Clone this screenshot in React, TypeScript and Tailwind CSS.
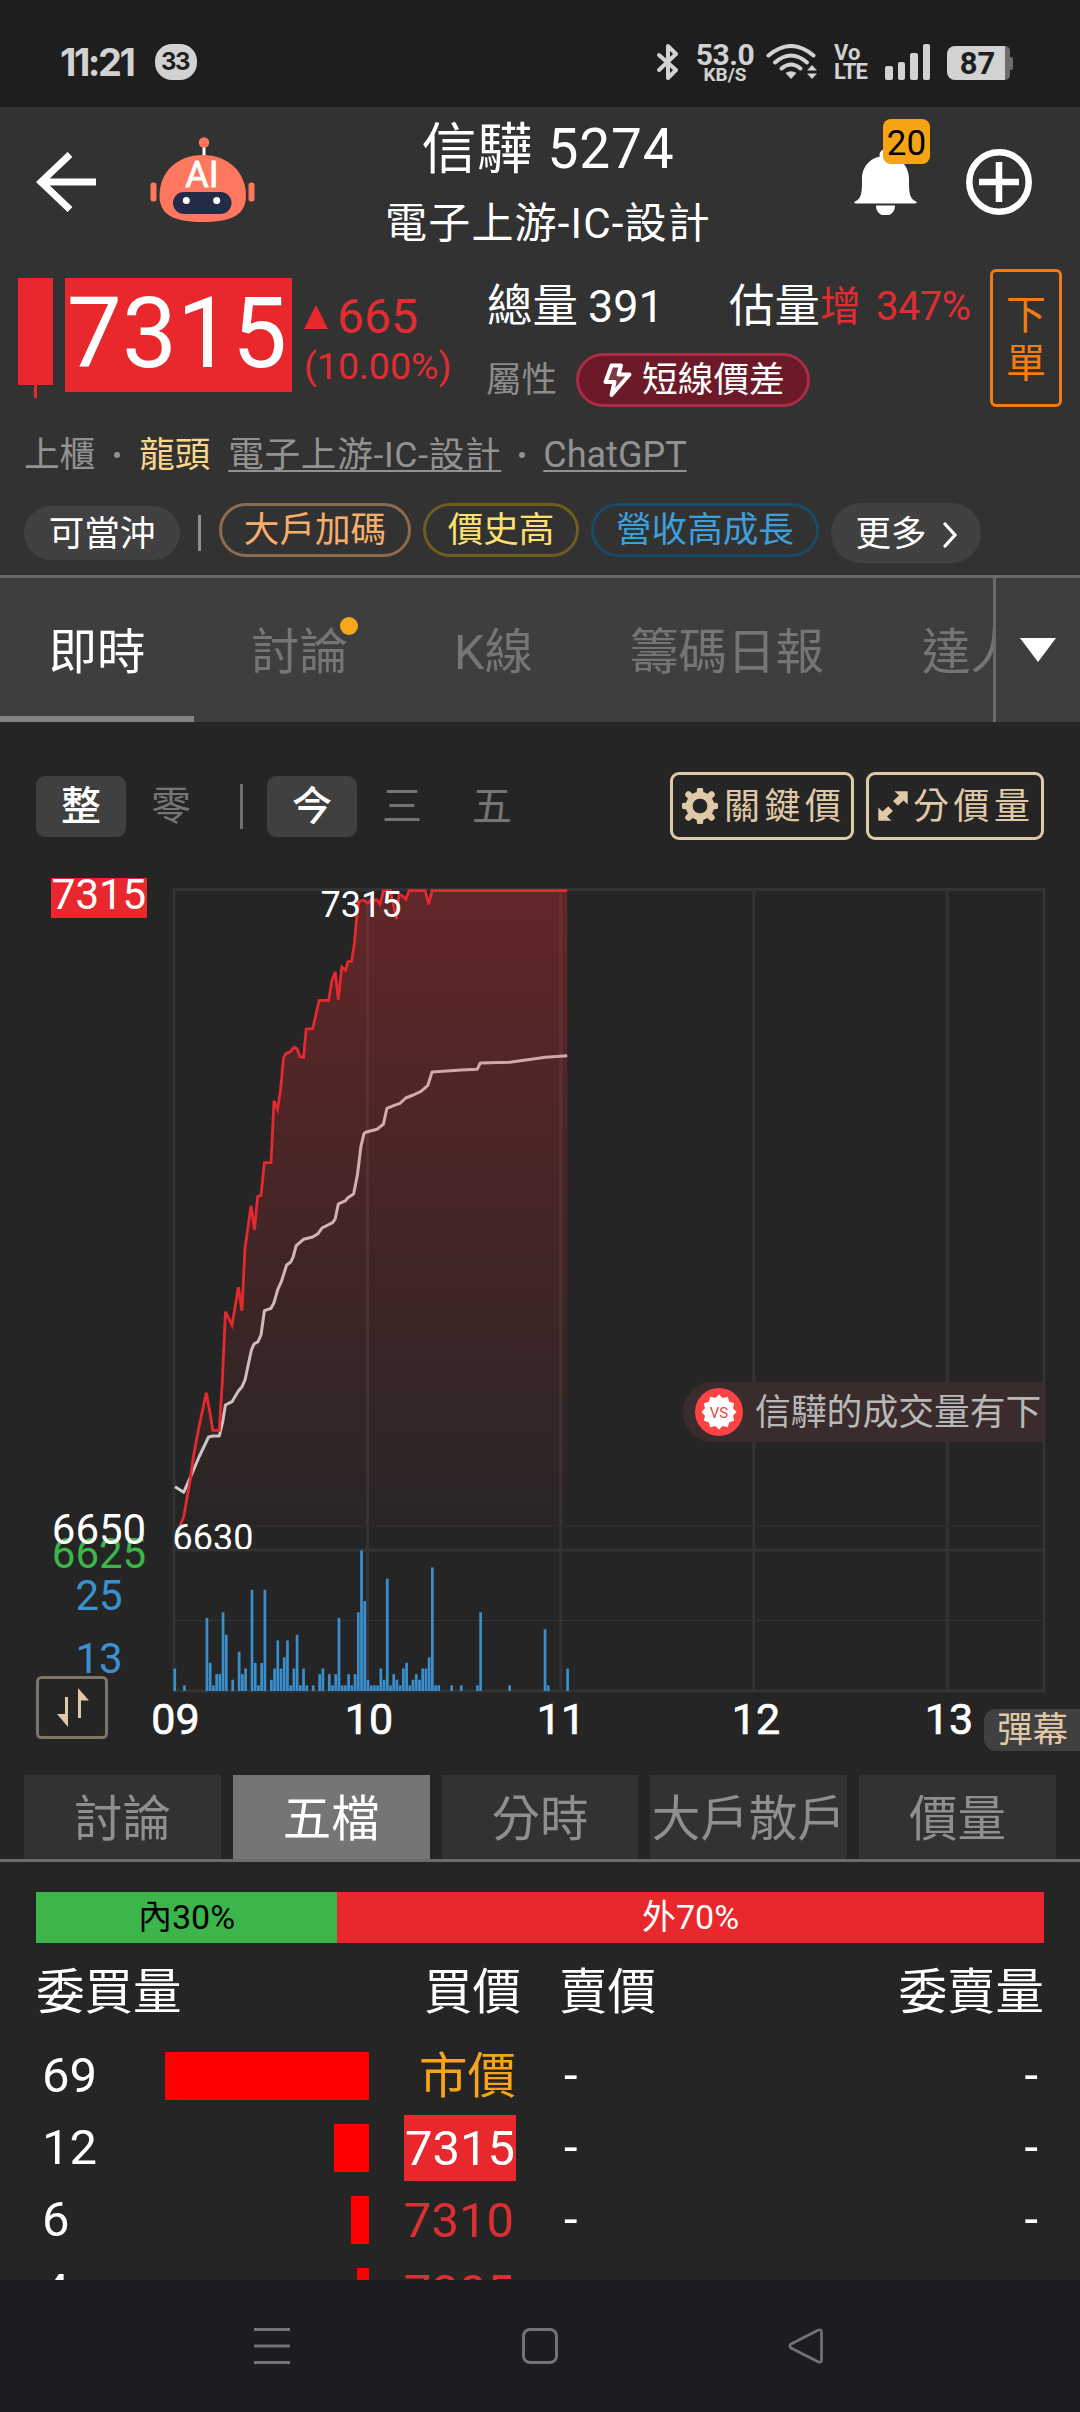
import clsx from "clsx";
import type { ReactNode } from "react";

// Precio por tick: x = minuto, y = precio, ya en coordenadas del gráfico.
const PRICE_LINE =
  "180,1526 183.7,1516.7 190.2,1480 193,1459 199,1426.7 206.3,1392.7 210,1413 212.8,1430.3 219.3,1430.3 222.3,1381.7 225.4,1311.7 232,1325 238.4,1287.3 241.9,1310.7 245,1248.3 251,1205.7 254.5,1229.7 257.6,1196.7 261,1195.3 264.4,1162.7 271,1162.7 274,1100.7 277.5,1109.3 280.5,1090 283.6,1057.3 286.3,1053.3 289.7,1052.3 292,1049.3 294.7,1047.3 297,1049 300,1056.7 303.5,1057.3 306.2,1029 312.7,1028.7 319.2,1000.3 328.7,1000.3 331.8,981 335.2,972 338.3,999.7 341.8,967 345.6,970.3 347.9,962 351.7,961 354.4,943.3 357,915 358.6,901.7 363.6,900 367.8,903.3 371,900 377,900 380,904 383.5,890.7 390.4,890.7 396.5,919 399,894.3 402.2,895.7 406,899.3 409,890.7 425.2,890.7 428.6,904.3 432,890.7 567.2,890.7";

const AVERAGE_LINE =
  "175,1486.7 183.7,1492.3 191.4,1475 199,1457 208.6,1437 212.8,1436 219.3,1436 222.7,1421.7 225.4,1405 232,1401.7 238.4,1391 242,1386.7 245,1380 251.4,1350 254,1344 258,1341.7 261,1335 264.4,1310.7 271,1308.3 274,1302.7 277.8,1289.3 281.3,1281.7 286.6,1265 290.5,1262.3 293,1257.3 296.2,1245.7 303.5,1239.3 312.7,1237 318,1233.7 322,1228 332.6,1222.7 335.2,1219 338.3,1204 345.6,1200.7 347.9,1197.7 353.6,1194 357.4,1175 360.9,1146.7 364,1133.3 367.4,1131.7 377,1129.3 383.5,1124 386.9,1108.3 394.2,1105.3 400,1103.3 405.7,1098 413.3,1095 421,1091.3 427.9,1085.3 432,1072 461.2,1070 477.2,1069.3 480.3,1063 509.8,1062.3 545.4,1057.3 567.2,1055.7";

// [minuto desde las 09:00, volumen]
const VOLUME: [number, number][] = [
  [0, 4], [3, 1], [10, 13], [11, 5], [12, 1], [13, 3], [14, 3], [15, 14], [16, 10], [18, 2],
  [20, 7], [21, 3], [22, 4], [24, 18], [25, 5], [26, 1], [27, 5], [28, 18], [30, 2], [31, 4],
  [32, 9], [33, 4], [34, 6], [35, 9], [36, 1], [37, 4], [38, 10], [39, 1], [40, 4], [41, 1],
  [43, 1], [45, 3], [46, 4], [48, 3], [49, 1], [50, 3], [51, 13], [52, 1], [53, 1], [54, 3],
  [55, 1], [56, 3], [57, 14], [58, 25], [59, 16], [60, 2], [61, 1], [62, 1], [63, 1], [64, 4],
  [65, 2], [66, 20], [67, 1], [68, 3], [69, 2], [70, 1], [71, 4], [72, 5], [73, 1], [74, 2],
  [75, 3], [76, 2], [77, 4], [78, 4], [79, 6], [80, 22], [81, 1], [82, 1], [86, 1], [89, 1],
  [94, 1], [95, 14], [104, 1], [115, 11], [116, 1], [122, 4],
];

const HOURS = [
  { label: "09", x: 175.5 },
  { label: "10", x: 369 },
  { label: "11", x: 561 },
  { label: "12", x: 756 },
  { label: "13", x: 949 },
];

const ORDERS = [
  { qty: "69", price: "市價", bar: 204, tone: "market" },
  { qty: "12", price: "7315", bar: 35, tone: "limit" },
  { qty: "6", price: "7310", bar: 18, tone: "up" },
  { qty: "4", price: "7305", bar: 12, tone: "up" },
];

function StatusBar() {
  return (
    <div className="flex h-[107px] items-start bg-[#1e1e1e] pt-11 text-[#d2d2d2]">
      <span className="ml-[60px] h-9 w-[80px] text-[38px] leading-[36px] font-bold tracking-[-2.500px] font-['Inter',sans-serif]">
        11:21
      </span>
      <span className="ml-[15px] flex h-9 w-[42px] items-center justify-center rounded-[17px] bg-[#d2d2d2] pr-[2px] text-[24px] leading-none font-bold tracking-[-1.500px] text-[#1e1e1e] font-['Inter',sans-serif]">
        33
      </span>
      <svg className="ml-[460px] h-9 w-[21px]" viewBox="0 0 21 36" fill="none" stroke="currentColor" strokeWidth="4" strokeLinecap="round" strokeLinejoin="round">
        <path d="M2 11 L19 26 L11 34 V2 L19 10 L2 26" />
      </svg>
      <div className="ml-[17px] w-[60px] text-center font-bold">
        <div className="h-[21px] text-[30px] leading-[21px] tracking-[-0.500px]">53.0</div>
        <div className="text-[19px] leading-[20px]">KB/S</div>
      </div>
      <svg className="ml-[11px] h-9 w-[52px]" viewBox="0 0 52 36" fill="none" stroke="currentColor" strokeWidth="4" strokeLinecap="round">
        <path d="M2.500 11.500 Q25 -7.500 47.500 11.500" />
        <path d="M9 18.500 Q25 4.500 41 18.500" />
        <path d="M15.500 24.500 Q25 16.500 34.500 24.500" />
        <path d="M19.500 29 Q25 25.500 30.500 29 L25 35 Z" fill="currentColor" stroke="none" />
        <path d="M41 26.500 L46 21 L51 26.500 Z M41 29.500 L46 35 L51 29.500 Z" fill="currentColor" stroke="none" />
      </svg>
      <div className="ml-[16px] w-[40px] font-bold">
        <div className="text-[22px] leading-[17px]">Vo</div>
        <div className="mt-[2px] text-[22px] leading-[18px] tracking-[-0.800px]">LTE</div>
      </div>
      <div className="ml-[11px] flex h-9 items-end gap-[5px]">
        <i className="h-[14px] w-[7.500px] rounded-[2px] bg-current" />
        <i className="h-[18px] w-[7.500px] rounded-[2px] bg-current" />
        <i className="h-[27px] w-[7.500px] rounded-[2px] bg-current" />
        <i className="h-[36px] w-[7.500px] rounded-[2px] bg-current" />
      </div>
      <div className="mt-[2px] ml-[17px] flex h-[34px] items-center">
        <div className="flex h-full w-[58px] items-center justify-center rounded-l-[8px] bg-current">
          <span className="ml-[3px] text-[31px] leading-none font-bold text-[#1e1e1e]">87</span>
        </div>
        <div className="h-full w-[5px] rounded-r-[5px] bg-[#6b6b6b]" />
        <div className="h-[13px] w-[2.500px] rounded-r-[2px] bg-[#6b6b6b]" />
      </div>
    </div>
  );
}

function Robot() {
  return (
    <svg className="h-[86px] w-[105px]" viewBox="150 138 105 86">
      <path d="M204 145 V158" stroke="#fff" strokeWidth="3" />
      <circle cx="204" cy="143.500" r="5.200" fill="#ff775e" />
      <rect x="150.500" y="183.500" width="6" height="19" rx="2.500" fill="#ff775e" />
      <rect x="248.500" y="183.500" width="6" height="19" rx="2.500" fill="#ff775e" />
      <path d="M202.800 156 C228 156 246 173 246 197 C246 217 229 223 202.800 223 C176 223 159.500 217 159.500 197 C159.500 173 177 156 202.800 156 Z" fill="#ff775e" />
      <rect x="173" y="193" width="58.500" height="22" rx="11" fill="#232b46" />
      <circle cx="186.300" cy="201.500" r="3.500" fill="#fff" />
      <circle cx="216.700" cy="201.500" r="3.500" fill="#fff" />
      <text x="202" y="188" textAnchor="middle" fontSize="36" fill="#fff" stroke="#fff" strokeWidth="0.800">AI</text>
    </svg>
  );
}

function TitleBar() {
  return (
    <div className="flex h-[150px] items-center">
      <div className="flex w-[260px] items-center">
        <svg className="ml-9 h-[60px] w-[60px]" viewBox="0 0 60 60" fill="none" stroke="#fff" strokeWidth="7">
          <path d="M34 2.500 L5 30 L34 57.500 M5 30 H60" />
        </svg>
        <div className="-mt-1 ml-[54px]">
          <Robot />
        </div>
      </div>
      <div className="flex h-full w-[576px] flex-col items-center pt-[10px] text-white">
        <div className="h-[64px] text-[55px] leading-[64px] tracking-[0.800px]">信驊 5274</div>
        <div className="mt-[15px] h-[56px] text-[42px] leading-[56px] tracking-[1.200px]">電子上游-IC-設計</div>
      </div>
      <div className="flex items-center">
        <div className="relative ml-[18px]">
          <svg className="h-[66px] w-[63px]" viewBox="0 0 63 66" fill="#fff">
            <circle cx="31.500" cy="6" r="6" />
            <path d="M31.500 7 C17 7 8 17 8 30 C8 42 8 50 1 52.500 Q-1 54 2 54.500 H61 Q64 54 62 52.500 C55 50 55 42 55 30 C55 17 46 7 31.500 7 Z" />
            <path d="M22 56.500 H41 C41 70 22 70 22 56.500 Z" />
          </svg>
          <span className="absolute -top-[30px] left-[29px] flex h-[45px] w-[47px] items-center justify-center rounded-[8px] bg-[#f7a414] pt-[3px] text-[35px] leading-none text-black">
            20
          </span>
        </div>
        <svg className="ml-[49px] h-[66px] w-[66px]" viewBox="0 0 66 66" fill="none" stroke="#fff" strokeWidth="6.500">
          <circle cx="33" cy="33" r="29.700" />
          <path d="M33 13 V53 M13 33 H53" />
        </svg>
      </div>
    </div>
  );
}

function Quote() {
  return (
    <div className="flex h-[163px] items-start pt-3">
      <div className="mt-[9px] ml-[18px] flex flex-col items-center">
        <div className="h-[107px] w-[35px] bg-[#e9282e]" />
        <div className="h-[13px] w-[3px] bg-[#e9282e]" />
      </div>
      <div className="mt-[9px] ml-3 flex h-[114px] w-[227px] justify-center bg-[#e9282e] pr-[3px] text-[98px] leading-[111px] text-white">
        7315
      </div>
      <div className="mt-[22px] ml-3 w-[180px] text-[#e02d32]">
        <div className="flex h-[52px] items-center">
          <svg className="h-6 w-6" viewBox="0 0 24 24">
            <path d="M12 0 L24 24 H0 Z" fill="#e9282e" />
          </svg>
          <span className="ml-[9px] text-[48px] leading-[52px]">665</span>
        </div>
        <div className="h-[46px] text-[37.500px] leading-[46px]">(10.00%)</div>
      </div>
      <div className="ml-[1px] w-[502px] shrink-0">
        <div className="mt-[15px] flex h-[46px] items-center text-[45.500px] leading-[46px] whitespace-nowrap text-white">
          <span className="ml-[2px]">總量</span>
          <span className="ml-[10px] text-[45px]">391</span>
          <span className="ml-[65px]">估量</span>
          <span className="text-[41px] text-[#e02d32]">增</span>
          <span className="ml-[15px] text-[40px] tracking-[-0.500px] text-[#e02d32]">347%</span>
        </div>
        <div className="mt-[23px] flex h-[54px] items-center">
          <span className="ml-[1px] text-[35.500px] leading-[54px] text-[#8c8c8c]">屬性</span>
          <div className="ml-[19px] flex h-[54px] w-[234px] items-center rounded-full border-[3px] border-[#ac2c47] bg-[#6c1a28] text-white">
            <svg className="ml-[24px] h-[35px] w-[29px]" viewBox="0 0 29 35" fill="#ffffff22" stroke="#fff" strokeWidth="4" strokeLinejoin="round">
              <path d="M8.500 2.500 H18 L15.500 11.500 H26.500 L8.500 32 L11.500 19 H2.500 Z" />
            </svg>
            <span className="ml-[10px] text-[35.700px] leading-[48px]">短線價差</span>
          </div>
        </div>
      </div>
      <button className="ml-[3px] flex h-[138px] w-[72px] shrink-0 flex-col items-center rounded-[6px] border-[3px] border-[#ee7d18] pt-[20px] text-[40px] leading-[48px] text-[#f57c10]">
        <span>下</span>
        <span>單</span>
      </button>
    </div>
  );
}

function MetaRow() {
  return (
    <div className="mt-[15px] flex h-10 items-center text-[35.600px] leading-10 whitespace-nowrap text-[#929292]">
      <span className="ml-[24px]">上櫃</span>
      <i className="ml-[19px] size-[6px] rounded-full bg-[#929292]" />
      <span className="ml-[19px] text-[#f9d88d]">龍頭</span>
      <a className="ml-[18px] tracking-[0.700px] underline decoration-2 underline-offset-[3px] [text-decoration-skip-ink:none]">電子上游-IC-設計</a>
      <i className="ml-[18px] size-[6px] rounded-full bg-[#929292]" />
      <a className="ml-[18px] text-[36px] underline decoration-2 underline-offset-[3px] [text-decoration-skip-ink:none]">ChatGPT</a>
    </div>
  );
}

function Chip({ className, children }: { className: string; children: ReactNode }) {
  return (
    <span
      className={clsx(
        "flex items-center justify-center rounded-full text-[35.600px] leading-[48px] whitespace-nowrap",
        className,
      )}
    >
      {children}
    </span>
  );
}

function ChipRow() {
  return (
    <div className="mt-[28px] flex h-[72px] items-start">
      <Chip className="mt-[3px] ml-6 h-[54px] w-[156px] bg-[#414141] pt-px text-white">可當沖</Chip>
      <i className="mt-3 ml-[18px] h-9 w-[3px] bg-[#8f8f8f]" />
      <Chip className="ml-[18px] h-[54px] w-[192px] border-[3px] border-[#8d6b4f] text-[#f9ae6b]">大戶加碼</Chip>
      <Chip className="ml-3 h-[54px] w-[156px] border-[3px] border-[#6f5d1d] text-[#fde06e]">價史高</Chip>
      <Chip className="ml-3 h-[54px] w-[228px] border-[3px] border-[#194a68] text-[#3d9fdc]">營收高成長</Chip>
      <Chip className="ml-3 h-[60px] w-[150px] bg-[#414141] pt-px text-white">
        更多
        <svg className="mt-[2px] ml-[16px] h-[26px] w-[14px]" viewBox="0 0 14 26" fill="none" stroke="#fff" strokeWidth="3.200" strokeLinecap="round">
          <path d="M2 2 L12 13 L2 24" />
        </svg>
      </Chip>
    </div>
  );
}

function TabBar() {
  return (
    <div className="flex h-[147px] border-t-[3px] border-[#6a6a6a] bg-[#3e3e3e]">
      <div className="flex w-[993px] overflow-hidden text-[48.500px] leading-[138px] whitespace-nowrap text-[#757575]">
        <div className="h-full w-[194px] shrink-0 border-b-[6px] border-[#828282] pt-[6px] text-center leading-[138px] text-white">即時</div>
        <div className="relative ml-[57px] pt-[6px]">
          討論
          <i className="absolute top-[39px] left-[89px] size-[18px] rounded-full bg-[#f5a81c]" />
        </div>
        <div className="ml-[106px] pt-[6px]">K線</div>
        <div className="ml-[97px] pt-[6px]">籌碼日報</div>
        <div className="ml-[98px] pt-[6px]">達人</div>
      </div>
      <div className="flex flex-1 items-center justify-center border-l-[3px] border-[#6a6a6a]">
        <svg className="h-6 w-9" viewBox="0 0 36 24">
          <path d="M0 0 H36 L18 24 Z" fill="#fff" />
        </svg>
      </div>
    </div>
  );
}

function Toggle({ active, children }: { active?: boolean; children: ReactNode }) {
  return (
    <span
      className={clsx(
        "flex h-[61px] w-[90px] items-center justify-center rounded-[9px] pt-[2px] text-[40px] leading-none",
        active ? "bg-[#404040] font-medium text-white" : "text-[#757575]",
      )}
    >
      {children}
    </span>
  );
}

function Toolbar() {
  return (
    <div className="flex h-[168px] items-center pl-9">
      <Toggle active>整</Toggle>
      <Toggle>零</Toggle>
      <i className="ml-[24px] h-[45px] w-[3px] bg-[#6f6f6f]" />
      <span className="w-[24px]" />
      <Toggle active>今</Toggle>
      <Toggle>三</Toggle>
      <Toggle>五</Toggle>
      <button className="ml-[133px] flex h-[68px] w-[184px] items-center rounded-[9px] border-[3px] border-[#e0c9a6] text-[36px] leading-none tracking-[4.500px] whitespace-nowrap text-[#e0c9a6]">
        <svg className="ml-[9px] h-9 w-9 shrink-0" viewBox="-18 -18 36 36" fill="none" stroke="#e0c9a6">
          <circle r="10.700" strokeWidth="7" />
          <path
            d="M0 -13 V-15.500 M0 13 V15.500 M-13 0 H-15.500 M13 0 H15.500 M9.500 9.500 L11.500 11.500 M-9.500 -9.500 L-11.500 -11.500 M9.500 -9.500 L11.500 -11.500 M-9.500 9.500 L-11.500 11.500"
            strokeWidth="6.500"
            strokeLinecap="round"
          />
          <circle r="7.300" fill="#252525" stroke="none" />
        </svg>
        <span className="ml-[6px] pt-px">關鍵價</span>
      </button>
      <button className="ml-3 flex h-[68px] w-[178px] items-center rounded-[9px] border-[3px] border-[#e0c9a6] text-[36px] leading-none tracking-[4.500px] whitespace-nowrap text-[#e0c9a6]">
        <svg className="ml-[9px] h-[30px] w-[30px] shrink-0" viewBox="0 0 30 30" fill="#e0c9a6">
          <path d="M16.500 0.300 H29.700 V13.500 L25.500 9.500 L19.800 14.800 L15 10 L21 4.500 Z" />
          <path d="M13.500 29.700 H0.300 V16.500 L4.500 20.500 L10.200 15.200 L15 20 L9 25.500 Z" />
        </svg>
        <span className="ml-[5px] pt-px">分價量</span>
      </button>
    </div>
  );
}

function VsBadge() {
  const points = Array.from({ length: 24 }, (_, i) => {
    const r = i % 2 ? 14.5 : 17.5;
    const a = (i * Math.PI) / 12;
    return `${r * Math.sin(a)},${-r * Math.cos(a)}`;
  }).join(" ");
  return (
    <svg className="size-12 shrink-0" viewBox="-24 -24 48 48">
      <circle r="24" fill="#fd4343" />
      <polygon points={points} fill="#fff" />
      <text y="6" textAnchor="middle" fontSize="15" fill="#e8474a">VS</text>
    </svg>
  );
}

function Chart() {
  return (
    <div className="relative h-[876px]">
      <svg className="block h-[876px] w-[1080px]" viewBox="0 876 1080 876">
        <defs>
          <linearGradient id="fill" x1="0" y1="890" x2="0" y2="1526" gradientUnits="userSpaceOnUse">
            <stop offset="0" stopColor="#e9282e" stopOpacity="0.31" />
            <stop offset="1" stopColor="#e9282e" stopOpacity="0.020" />
          </linearGradient>
          <clipPath id="plot">
            <rect x="173" y="889" width="871" height="660" />
          </clipPath>
        </defs>

        <g stroke="#333333" strokeWidth="3" fill="none">
          <path d="M172.500 889.500 H1045.500 M172.500 1550 H1045.500 M172.500 1691 H1045.500" />
          <path d="M174 888 V1692 M367.500 890 V1692 M560.700 890 V1692 M753.800 890 V1692 M947.300 890 V1692 M1044 888 V1692" />
          <path d="M174 1526 H1044" strokeWidth="1.500" stroke="#2d2d2d" />
          <path d="M174 1620.500 H1044" strokeWidth="1" />
        </g>

        <polyline points={AVERAGE_LINE} fill="none" stroke="#cdcdcd" strokeWidth="3" strokeLinejoin="round" />
        <polygon points={`${PRICE_LINE} 567.200,1526`} fill="url(#fill)" />
        <g clipPath="url(#plot)">
          <path d="M175 1544 L180 1526" stroke="#2c6b35" strokeWidth="3" />
          <polyline points={PRICE_LINE} fill="none" stroke="#e52a2f" strokeWidth="2.800" />
        </g>

        {VOLUME.map(([minute, lots]) => (
          <rect key={minute} x={173.4 + minute * 3.22} y={1691 - lots * 5.62} width="2.700" height={lots * 5.62} fill="#3a8fcd" />
        ))}

        <rect x="51" y="878" width="96" height="40" fill="#e9282e" />
        <g fontSize="42" textAnchor="middle">
          <text x="99" y="908.500" fill="#fff">7315</text>
          <text x="99" y="1568" fill="#3cb54a">6625</text>
          <text x="99" y="1544" fill="#fff">6650</text>
          <text x="99" y="1610" fill="#3b91cf">25</text>
          <text x="99" y="1673" fill="#3b91cf">13</text>
        </g>
        <g fontSize="36" fill="#fff" clipPath="url(#plot)">
          <text x="361" y="917" textAnchor="middle">7315</text>
          <text x="172.500" y="1550">6630</text>
        </g>
        <g fontSize="43" fill="#fff" stroke="#fff" strokeWidth="0.700" textAnchor="middle">
          {HOURS.map((h) => (
            <text key={h.label} x={h.x} y="1734">{h.label}</text>
          ))}
        </g>

        <rect x="37.500" y="1677.500" width="69" height="60" rx="4" fill="#252525" stroke="#7d7566" strokeWidth="3" />
        <path d="M65 1697 H68 V1727 L57 1714 H65 Z M78 1688 L89 1700.500 H81 V1718 H78 Z" fill="#e0c9a6" />
      </svg>

      {/* Comentario que se desliza sobre el gráfico */}
      <div className="absolute top-[506px] left-[683px] flex h-[60px] w-[360px] items-center overflow-hidden rounded-l-full bg-[#3a2c2c] pl-3 text-[35.800px] leading-[60px] whitespace-nowrap text-[#b8b8b8]">
        <VsBadge />
        <span className="ml-3 pt-px">信驊的成交量有下</span>
      </div>
      <div className="absolute top-[833px] right-0 h-[42px] w-24 rounded-l-[12px] bg-[#404040] pl-[13px] text-[35.600px] leading-[43px] whitespace-nowrap text-[#e0c9a6]">
        彈幕
      </div>
    </div>
  );
}

function DetailTabs() {
  return (
    <div className="flex h-[110px] gap-3 border-b-[3px] border-[#6c6c6c] px-6 pt-[23px]">
      {["討論", "五檔", "分時", "大戶散戶", "價量"].map((label) => (
        <div
          key={label}
          className={clsx(
            "flex flex-1 basis-0 items-center justify-center text-[48.500px] leading-none whitespace-nowrap",
            label === "五檔" ? "bg-[#757575] text-white" : "bg-[#323232] text-[#8f8f8f]",
          )}
        >
          <span className="pt-[6px]">{label}</span>
        </div>
      ))}
    </div>
  );
}

function OrderBook() {
  return (
    <div className="h-[418px] overflow-hidden px-9 pt-[30px]">
      <div className="flex h-[51px] text-[34px] leading-[51px]">
        <div className="w-[301px] bg-[#3cb54a] text-center text-black">內30%</div>
        <div className="flex-1 bg-[#e9282e] text-center text-white">外70%</div>
      </div>
      <div className="mt-[13px] flex h-[72px] text-[48.500px] leading-[73px] text-white">
        <span className="w-[388px]">委買量</span>
        <span className="w-[135px]">買價</span>
        <span className="flex-1">賣價</span>
        <span>委賣量</span>
      </div>
      <div className="mt-[12px]">
        {ORDERS.map((o) => (
          <div key={o.qty} className="flex h-[72px] items-center text-[49px] leading-[68px] text-white">
            <span className="w-[100px] pl-[6px]">{o.qty}</span>
            <div className="flex w-[233px] justify-end">
              <div className="mb-px h-12 bg-[#fe0000]" style={{ width: o.bar }} />
            </div>
            <div className="flex w-[147px] justify-end">
              <span
                className={clsx(
                  "h-[66px]",
                  o.tone === "market" && "text-[48.500px] text-[#f7a41c]",
                  o.tone === "limit" && "w-[112px] bg-[#e9282e] text-center",
                  o.tone === "up" && "pr-[2px] text-[#dc2f34]",
                )}
              >
                {o.price}
              </span>
            </div>
            <span className="flex-1 pl-[48px]">-</span>
            <span className="pr-[6px]">-</span>
          </div>
        ))}
      </div>
    </div>
  );
}

function NavBar() {
  return (
    <div className="flex h-[132px] items-center bg-[#1c1d21] text-[#737377]">
      <svg className="ml-[254px] size-9" viewBox="0 0 36 36" stroke="currentColor" strokeWidth="3">
        <path d="M0 1.500 H36 M0 18 H36 M0 34.500 H36" />
      </svg>
      <div className="ml-[232px] size-9 rounded-[8px] border-[3px] border-current" />
      <svg className="ml-[230px] h-9 w-9" viewBox="0 0 36 36" fill="none" stroke="currentColor" strokeWidth="2.700" strokeLinejoin="round">
        <path d="M3 16 L30.500 2 Q33.500 1 33.500 4 V32 Q33.500 35 30.500 34 L3 20 Q0.500 18 3 16 Z" />
      </svg>
    </div>
  );
}

export default function App() {
  return (
    <div className="h-[2412px] w-[1080px] overflow-hidden bg-[#252525] font-['Roboto','Noto_Sans_CJK_TC',sans-serif]">
      <StatusBar />
      <header className="bg-[#323232]">
        <TitleBar />
        <Quote />
        <MetaRow />
        <ChipRow />
      </header>
      <TabBar />
      <Toolbar />
      <div className="-mt-[14px]">
        <Chart />
      </div>
      <DetailTabs />
      <OrderBook />
      <NavBar />
    </div>
  );
}
